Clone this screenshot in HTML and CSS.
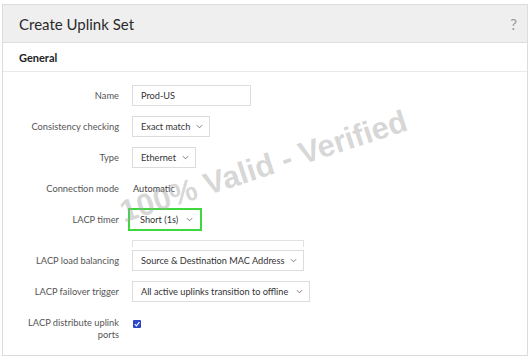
FILE: index.html
```html
<!DOCTYPE html>
<html>
<head>
<meta charset="utf-8">
<link rel="stylesheet" href="styles.css">
</head>
<body>
<div class="panel">
  <div class="header">
    <span class="title">Create Uplink Set</span>
    <span class="help">?</span>
  </div>
  <div class="section">General</div>
  <div class="form">
    <div class="label">Name</div>
    <div class="ctrl"><div class="input w-name">Prod-US</div></div>

    <div class="label">Consistency checking</div>
    <div class="ctrl"><div class="select w-cons">Exact match<svg class="chev" viewBox="0 0 8 5"><path d="M1 1l3 3 3-3" /></svg></div></div>

    <div class="label">Type</div>
    <div class="ctrl"><div class="select w-type">Ethernet<svg class="chev" viewBox="0 0 8 5"><path d="M1 1l3 3 3-3" /></svg></div></div>

    <div class="label">Connection mode</div>
    <div class="ctrl"><span class="plain">Automatic</span></div>

    <div class="label">LACP timer</div>
    <div class="ctrl"><div class="select highlight w-timer">Short (1s)<svg class="chev" viewBox="0 0 8 5"><path d="M1 1l3 3 3-3" /></svg></div></div>

    <div class="label ghost-row"></div>
    <div class="ctrl ghost-row"><div class="ghost"></div></div>

    <div class="label">LACP load balancing</div>
    <div class="ctrl"><div class="select w-lb">Source &amp; Destination MAC Address<svg class="chev" viewBox="0 0 8 5"><path d="M1 1l3 3 3-3" /></svg></div></div>

    <div class="label">LACP failover trigger</div>
    <div class="ctrl"><div class="select w-fo">All active uplinks transition to offline<svg class="chev" viewBox="0 0 8 5"><path d="M1 1l3 3 3-3" /></svg></div></div>

    <div class="label multi">LACP distribute uplink<br>ports</div>
    <div class="ctrl top"><span class="checkbox"><svg viewBox="0 0 8 8"><path d="M1.8 4.2l1.6 1.6 3-3.6" /></svg></span></div>
  </div>
  <div class="watermark">100% Valid - Verified</div>
</div>
</body>
</html>
```
FILE: styles.css
```css
* { box-sizing: border-box; }
html, body { margin: 0; padding: 0; background: #fff; }
body {
  font-family: "Lato", "Open Sans", sans-serif;
  color: #333;
  width: 530px;
  height: 361px;
  overflow: hidden;
}
.panel {
  position: relative;
  margin: 4px 2px 0 2px;
  height: 352px;
  border: 1px solid #dcdcdc;
  overflow: hidden;
}
.header {
  height: 38px;
  background: #efefef;
  border-bottom: 1px solid #dedede;
  display: flex;
  align-items: center;
  justify-content: space-between;
  padding: 0 10px 0 16px;
}
.title { font-size: 15px; color: #2a2a2a; }
.help { font-size: 15px; color: #999; }
.section {
  height: 29px;
  display: flex;
  align-items: center;
  padding-left: 16px;
  font-weight: bold;
  font-size: 11px;
  color: #222;
  border-bottom: 1px solid #eaeaea;
}
.form {
  display: grid;
  grid-template-columns: 116px auto;
  column-gap: 13px;
  row-gap: 10px;
  padding-top: 13px;
  align-items: center;
}
.label {
  text-align: right;
  font-size: 9.3px;
  color: #555;
  line-height: 21px;
}
.label.multi { line-height: 12px; padding-top: 5px; align-self: start; }
.ctrl { display: flex; align-items: center; min-height: 21px; }
.ctrl.top { align-self: start; padding-top: 8px; min-height: 0; }
.input, .select {
  height: 21px;
  border: 1px solid #dcdcdc;
  font-size: 9.2px;
  color: #333;
  display: flex;
  align-items: center;
  padding-left: 8px;
  background: #fff;
}
.select { justify-content: space-between; padding-right: 6px; }
.chev { width: 7px; height: 5px; flex: none; }
.chev path { fill: none; stroke: #777; stroke-width: 1.1; }
.w-name { width: 119px; }
.w-cons { width: 78px; }
.w-type { width: 64px; }
.w-timer { width: 74px; }
.w-lb { width: 172px; }
.w-fo { width: 178px; }
.highlight {
  border: 2px solid #3ed83e;
  height: 23px;
  margin: -1px 0 -1px -4px;
  padding-left: 10px;
  padding-right: 7px;
}
.plain { font-size: 9.2px; color: #444; padding-left: 1px; }
.ghost-row { min-height: 0; line-height: 0; margin-bottom: -7px; }
.ghost {
  width: 172px;
  height: 7px;
  border: 1px solid #e2e2e2;
  border-bottom: none;
}
.checkbox {
  width: 8px;
  height: 8px;
  background: #2b46c8;
  border-radius: 1px;
  display: inline-flex;
  margin-left: 1px;
}
.checkbox svg { width: 8px; height: 8px; }
.checkbox path { fill: none; stroke: #fff; stroke-width: 1.2; }
.watermark {
  position: absolute;
  left: 118px;
  top: 190px;
  font-family: "Liberation Sans", Arial, sans-serif;
  font-weight: bold;
  font-size: 31px;
  color: rgba(165, 165, 165, 0.45);
  transform: rotate(-18deg);
  transform-origin: left center;
  white-space: nowrap;
  pointer-events: none;
}
```
